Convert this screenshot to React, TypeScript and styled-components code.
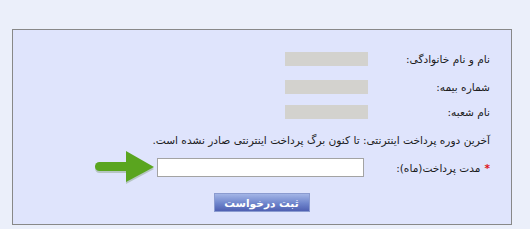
import React from "react";
import styled, { createGlobalStyle } from "styled-components";

const GlobalStyle = createGlobalStyle`
  html, body {
    margin: 0;
    padding: 0;
    background: #ebeffa;
  }
`;

const Page = styled.div`
  padding: 29px 18px 4px 12px;
  font-family: "DejaVu Sans", Tahoma, sans-serif;
  font-size: 10.6px;
  color: #1c1c1c;
`;

const Panel = styled.div`
  direction: rtl;
  background: #dfe4fc;
  border: 1px solid #888;
  padding: 22px 21px 12px 20px;
`;

const Row = styled.div<{ $top: number; $height: number }>`
  display: grid;
  grid-template-columns: 122px 1fr;
  align-items: center;
  height: ${(p) => p.$height}px;
  margin-top: ${(p) => p.$top}px;
`;

const Label = styled.div`
  white-space: nowrap;
`;

const Star = styled.span`
  color: #e0151b;
  font-weight: bold;
  margin-left: 4px;
`;

const Blank = styled.div`
  width: 83px;
  height: 14px;
  background: #d3d2ce;
`;

const Note = styled.div<{ $top: number }>`
  margin-top: ${(p) => p.$top}px;
  height: 14px;
  line-height: 14px;
  white-space: nowrap;
`;

const Field = styled.div`
  display: flex;
  align-items: center;
`;

const Input = styled.input`
  box-sizing: border-box;
  width: 207px;
  height: 19px;
  border: 1px solid #a3a3a3;
  background: #fff;
  margin: 0 4px 0 0;
  padding: 0 3px;
`;

const Arrow = styled.svg`
  margin: -7px 2px -7px 0;
  flex: none;
`;

const Actions = styled.div`
  display: flex;
  justify-content: center;
  margin-top: 16px;
`;

const Submit = styled.button`
  width: 96px;
  height: 19px;
  padding: 0;
  border: 1px solid #8b9bd0;
  background: linear-gradient(#a3b5e6, #6f85cc 55%, #4f60b2);
  color: #fff;
  font-family: "DejaVu Sans", Tahoma, sans-serif;
  font-size: 10.6px;
  font-weight: bold;
  cursor: pointer;
`;

const GreenArrow = () => (
  <Arrow width="60" height="33" viewBox="0 0 60 33">
    <g fill="#3d6a1a" opacity="0.25" transform="translate(0 2)">
      <rect x="0" y="11" width="36" height="9" rx="4.5" />
      <polygon points="31,0 59,16 31,31" />
    </g>
    <g fill="#5aa51f">
      <rect x="0" y="11" width="36" height="9" rx="4.5" />
      <polygon points="31,0 59,16 31,31" />
    </g>
  </Arrow>
);

export default function App() {
  return (
    <>
      <GlobalStyle />
      <Page>
        <Panel>
          <Row $top={0} $height={14}>
            <Label>نام و نام خانوادگی:</Label>
            <Blank />
          </Row>
          <Row $top={14} $height={14}>
            <Label>شماره بیمه:</Label>
            <Blank />
          </Row>
          <Row $top={11} $height={14}>
            <Label>نام شعبه:</Label>
            <Blank />
          </Row>
          <Note $top={14}>
            آخرین دوره پرداخت اینترنتی: تا کنون برگ پرداخت اینترنتی صادر نشده است.
          </Note>
          <Row $top={11} $height={19}>
            <Label>
              <Star>*</Star>
              مدت پرداخت(ماه):
            </Label>
            <Field>
              <Input type="text" />
              <GreenArrow />
            </Field>
          </Row>
          <Actions>
            <Submit type="button">ثبت درخواست</Submit>
          </Actions>
        </Panel>
      </Page>
    </>
  );
}
